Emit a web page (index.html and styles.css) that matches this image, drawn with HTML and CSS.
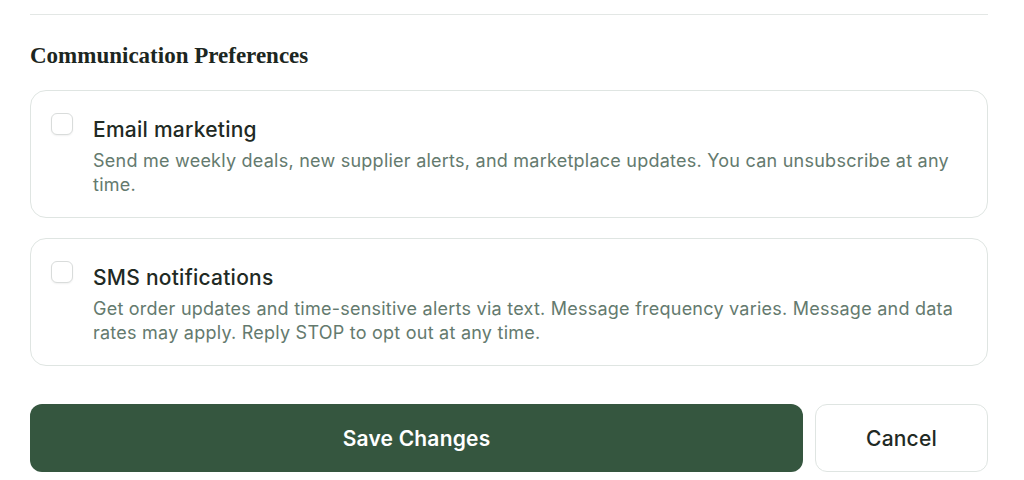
FILE: index.html
```html
<!DOCTYPE html>
<html lang="en">
<head>
    <meta charset="UTF-8">
    <meta name="viewport" content="width=device-width, initial-scale=1.0">
    <title>Communication Preferences</title>
    <link rel="stylesheet" href="styles.css">
</head>
<body>
    <div class="settings">
        <hr class="divider">

        <h2 class="section-title">Communication Preferences</h2>

        <label class="pref-card">
            <input type="checkbox" class="pref-check">
            <div class="pref-text">
                <div class="pref-title">Email marketing</div>
                <p class="pref-desc">Send me weekly deals, new supplier alerts, and marketplace updates. You can unsubscribe at any time.</p>
            </div>
        </label>

        <label class="pref-card">
            <input type="checkbox" class="pref-check">
            <div class="pref-text">
                <div class="pref-title">SMS notifications</div>
                <p class="pref-desc">Get order updates and time-sensitive alerts via text. Message frequency varies. Message and data rates may apply. Reply STOP to opt out at any time.</p>
            </div>
        </label>

        <div class="actions">
            <button class="btn save">Save Changes</button>
            <button class="btn cancel">Cancel</button>
        </div>
    </div>
</body>
</html>
```

FILE: styles.css
```css
body {
    margin: 0;
    background: #fff;
    font-family: Inter, "Noto Sans", sans-serif;
    color: #1f2a24;
}
.settings {
    padding: 0 36px 0 30px;
}
.divider {
    border: none;
    border-top: 1px solid #e3e7e5;
    margin: 14px 0 0;
}
.section-title {
    font-family: "Liberation Serif", serif;
    font-weight: bold;
    font-size: 23px;
    line-height: 28px;
    margin: 27px 0 20px;
    color: #1c2621;
}
.pref-card {
    display: flex;
    gap: 20px;
    align-items: flex-start;
    border: 1px solid #dfe5e2;
    border-radius: 16px;
    padding: 22px 20px 20px;
    margin-bottom: 20px;
    cursor: pointer;
}
.pref-check {
    appearance: none;
    -webkit-appearance: none;
    flex: none;
    width: 22px;
    height: 22px;
    margin: 0;
    border: 1px solid #d9dcdb;
    border-radius: 6px;
    background: #fff;
    box-shadow: 0 1px 2px rgba(0, 0, 0, 0.06);
}
.pref-text {
    padding-top: 2px;
}
.pref-title {
    font-size: 21px;
    font-weight: 500;
    line-height: 30px;
    letter-spacing: 0.25px;
    color: #1f2a24;
}
.pref-desc {
    margin: 4px 0 0;
    font-size: 18px;
    line-height: 24px;
    letter-spacing: 0.24px;
    color: #647a6e;
}
.actions {
    display: flex;
    gap: 12px;
    margin-top: 38px;
}
.btn {
    font-family: Inter, "Noto Sans", sans-serif;
    font-size: 21px;
    font-weight: 600;
    letter-spacing: 0.2px;
    height: 68px;
    border-radius: 12px;
    cursor: pointer;
}
.save {
    flex: 1;
    background: #35563f;
    color: #fff;
    border: none;
}
.cancel {
    width: 173px;
    background: #fff;
    color: #1f2a24;
    border: 1px solid #dfe5e2;
    font-weight: 500;
}
```
